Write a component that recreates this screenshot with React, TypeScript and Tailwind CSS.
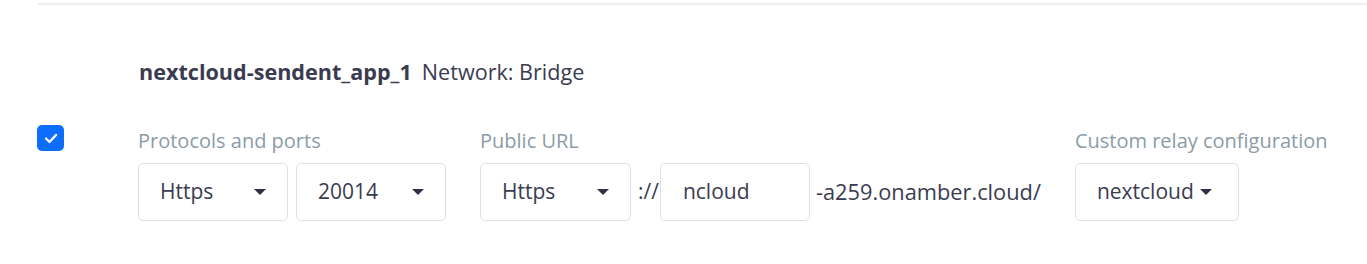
const Caret = () => (
  <svg width="12" height="6" viewBox="0 0 12 6" className="shrink-0">
    <path d="M0 0h12L6 6z" fill="#2f2f45" />
  </svg>
)

const Select = ({ value, width, tight }: { value: string; width: string; tight?: boolean }) => (
  <div
    className={`${width} h-[58px] flex items-center ${tight ? "gap-[6px]" : "justify-between"} pl-[21px] pr-[21px] border border-[#dde1e5] rounded-[5px] bg-white text-[21px] text-[#3b3b50]`}
  >
    <span>{value}</span>
    <Caret />
  </div>
)

const Label = ({ children }: { children: string }) => (
  <div className="text-[20px] leading-[26px] text-[#8c9ca6] mb-[9px]">{children}</div>
)

export default function App() {
  return (
    <div className="w-[1367px] h-[264px] bg-white font-['Open_Sans',sans-serif] pt-[3px]">
      <div className="ml-[37px] border-t-2 border-[#eeeff1]" />

      {/* container name */}
      <div className="ml-[139px] mt-[53px] flex items-baseline gap-[10px] text-[21.6px] leading-[28px] text-[#3b3b50]">
        <span className="font-bold">nextcloud-sendent_app_1</span>
        <span>Network: Bridge</span>
      </div>

      {/* ports row */}
      <div className="mt-[39px] ml-[37px] flex">
        <div className="w-[27px] h-[26px] rounded-[5px] bg-[#0d6efd] flex items-center justify-center">
          <svg width="14" height="11" viewBox="0 0 14 11">
            <path d="M2 5.5l3.5 3.5L12 2" fill="none" stroke="white" strokeWidth="2.4" strokeLinecap="round" strokeLinejoin="round" />
          </svg>
        </div>

        <div className="ml-[74px] pt-[3px] flex gap-[34px]">
          <div>
            <Label>Protocols and ports</Label>
            <div className="flex gap-[8px]">
              <Select value="Https" width="w-[150px]" />
              <Select value="20014" width="w-[150px]" />
            </div>
          </div>

          <div>
            <Label>Public URL</Label>
            <div className="flex items-center text-[21px] text-[#3b3b50]">
              <Select value="Https" width="w-[151px]" />
              <span className="ml-[7px] mr-[1px]">://</span>
              <div className="w-[150px] h-[58px] flex items-center pl-[22px] border border-[#dde1e5] rounded-[5px]">ncloud</div>
              <span className="ml-[6px] text-[21.8px]">-a259.onamber.cloud/</span>
            </div>
          </div>

          <div>
            <Label>Custom relay configuration</Label>
            <Select value="nextcloud" width="w-[164px]" tight />
          </div>
        </div>
      </div>
    </div>
  )
}
